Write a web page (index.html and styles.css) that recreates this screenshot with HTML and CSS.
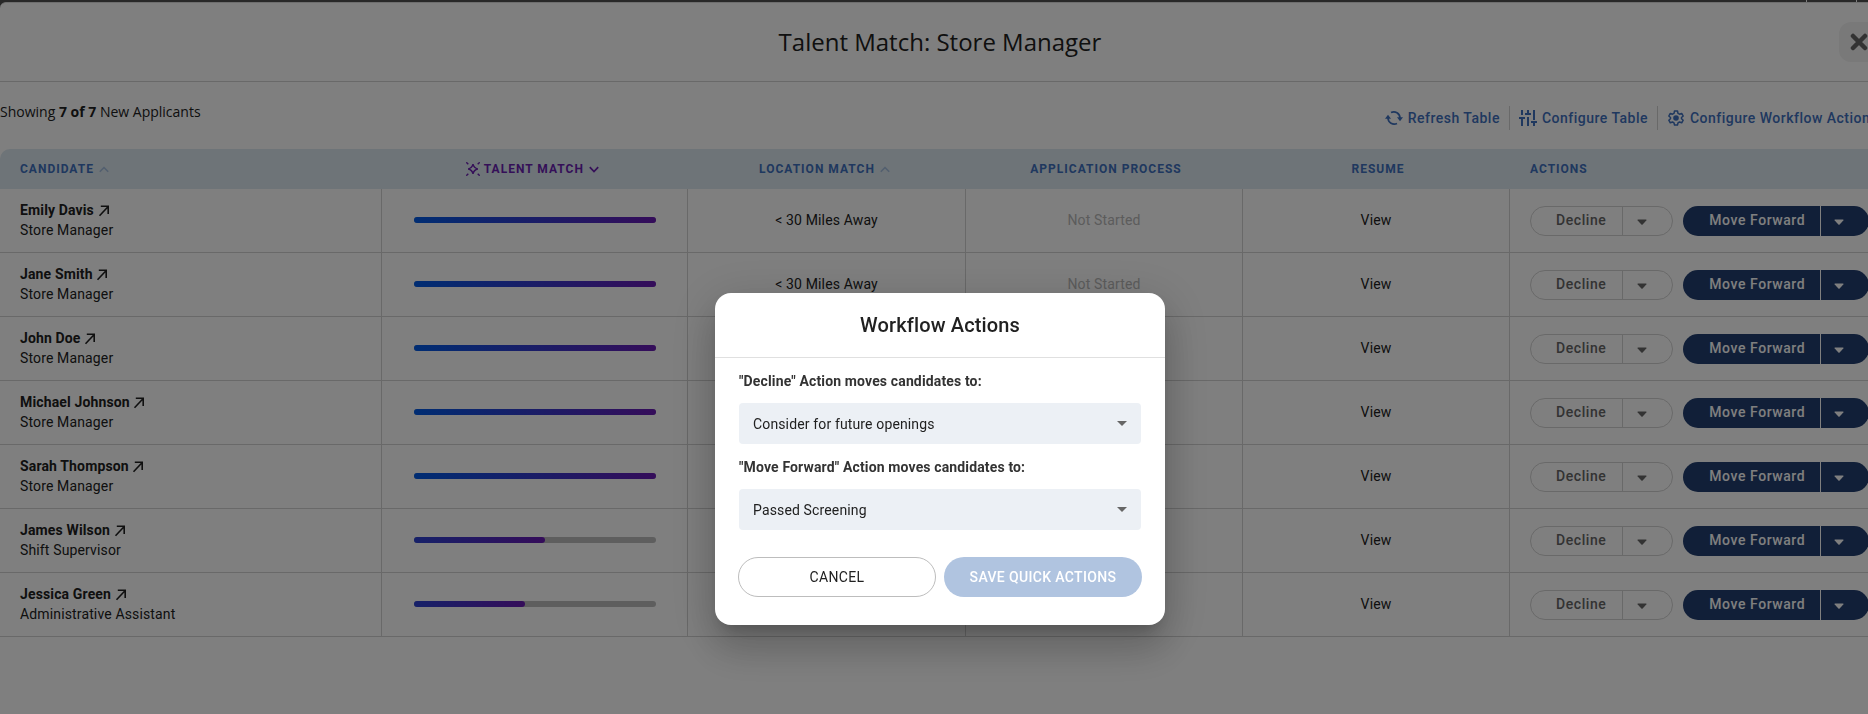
FILE: index.html
```html
<!DOCTYPE html>
<html lang="en">
<head>
<meta charset="utf-8">
<title>Talent Match: Store Manager</title>
<link rel="stylesheet" href="styles.css">
</head>
<body>
<svg class="sprite" aria-hidden="true">
  <symbol id="i-out" viewBox="0 0 12 12"><path d="M1.5 10.8 10 1.8M2.8 1.3H10.2V9" fill="none" stroke="currentColor" stroke-width="1.6"/></symbol>
  <symbol id="i-caret" viewBox="0 0 10 5"><path d="M0 0h10L5 5z" fill="currentColor"/></symbol>
  <symbol id="i-menu" viewBox="0 0 10 6"><path d="M1 .5h8q.8.2.3.900L5.600 5.400q-.6.5-1.200 0L.7 1.400Q.2.700 1 .5z" fill="currentColor"/></symbol>
  <symbol id="i-up" viewBox="0 0 10 7"><path d="M.8 5.800 5 1.500 9.200 5.800" fill="none" stroke="currentColor" stroke-width="1.500"/></symbol>
</svg>
<div class="topbar"><span></span><span></span></div>
<main class="page">
  <header class="page-head">
    <h1>Talent Match: Store Manager</h1>
    <button class="close" aria-label="Close"><svg viewBox="0 0 18 18"><path d="M3 3 15 15M15 3 3 15" fill="none" stroke="currentColor" stroke-width="4.500" stroke-linecap="round"/></svg></button>
  </header>
  <div class="tools">
    <p>Showing <b>7 of 7</b> New Applicants</p>
    <nav>
      <button><svg viewBox="0 0 18 16"><path d="M6 2.600A6.200 6.200 0 0 1 15 8M12 13.400A6.200 6.200 0 0 1 3 8" fill="none" stroke="currentColor" stroke-width="1.700"/><path d="M0 8.800 3 4.800 6 8.800zM12 7.200 15 11.200 18 7.200z" fill="currentColor"/></svg>Refresh Table</button>
      <button><svg viewBox="0 0 18 16"><path d="M3 0v5M3 8v8M0 8h6M9 0v4M6 4h6M9 7v9M15 0v10M15 13v3M12 12h6" fill="none" stroke="currentColor" stroke-width="2"/></svg>Configure Table</button>
      <button><svg viewBox="0 0 16 16"><path d="M6.500 1h3l.5 2.300 1.500.9 2.200-.8 1.500 2.600-1.700 1.500v1.200l1.700 1.500-1.500 2.600-2.200-.8-1.500.9-.5 2.100h-3l-.5-2.100-1.500-.9-2.200.8-1.500-2.600 1.700-1.500V7.500L.8 6l1.500-2.600 2.200.8L6 3.300z" fill="none" stroke="currentColor" stroke-width="1.500" stroke-linejoin="round"/><circle cx="8" cy="8" r="2.800" fill="currentColor"/></svg>Configure Workflow Actions</button>
    </nav>
  </div>
  <table>
    <colgroup><col class="c1"><col class="c2"><col class="c3"><col class="c4"><col class="c5"><col class="c6"></colgroup>
    <thead><tr>
      <th class="left">Candidate <svg class="sort"><use href="#i-up"/></svg></th>
      <th class="sortable talent"><svg class="spark" viewBox="0 0 14 14"><path d="M7 2.200Q7.900 6.100 11.800 7 7.900 7.900 7 11.800 6.100 7.900 2.200 7 6.100 6.100 7 2.200z" fill="none" stroke="currentColor" stroke-width="1.400"/><path d="M.3.3 2.300 2.300M13.700.3 11.700 2.300M.3 13.700 2.300 11.700M13.700 13.700 11.700 11.700" stroke="currentColor" stroke-width="1.400"/></svg> Talent Match <svg class="sort on" viewBox="0 0 10 7"><path d="M.8 1.200 5 5.500 9.200 1.200" fill="none" stroke="currentColor" stroke-width="1.700"/></svg></th>
      <th class="sortable">Location Match <svg class="sort"><use href="#i-up"/></svg></th>
      <th class="plain">Application Process</th>
      <th class="plain">Resume</th>
      <th class="left">Actions</th>
    </tr></thead>
    <tbody id="rows"></tbody>
  </table>
</main>
<div class="overlay">
  <form class="dialog" role="dialog" aria-labelledby="dlg-title">
    <h2 id="dlg-title">Workflow Actions</h2>
    <div class="dialog-body">
      <label for="decline">"Decline" Action moves candidates to:</label>
      <div class="field"><select id="decline"><option>Consider for future openings</option></select><svg><use href="#i-caret"/></svg></div>
      <label for="forward">"Move Forward" Action moves candidates to:</label>
      <div class="field"><select id="forward"><option>Passed Screening</option></select><svg><use href="#i-caret"/></svg></div>
      <div class="dialog-actions">
        <button type="button" class="cancel">CANCEL</button>
        <button type="button" class="save" disabled>SAVE QUICK ACTIONS</button>
      </div>
    </div>
  </form>
</div>
<script src="rows.js"></script>
</body>
</html>
```
FILE: rows.js
```js
const candidates = [
  ["Emily Davis", "Store Manager", 100],
  ["Jane Smith", "Store Manager", 100],
  ["John Doe", "Store Manager", 100],
  ["Michael Johnson", "Store Manager", 100],
  ["Sarah Thompson", "Store Manager", 100],
  ["James Wilson", "Shift Supervisor", 54],
  ["Jessica Green", "Administrative Assistant", 46]
];
const caret = '<svg class="caret"><use href="#i-menu"/></svg>';
document.getElementById("rows").innerHTML = candidates.map(([name, role, score]) => `
  <tr>
    <td class="left"><a href="#">${name} <svg class="out"><use href="#i-out"/></svg></a><span class="role">${role}</span></td>
    <td><div class="bar"><div class="fill${score < 100 ? " partial" : ""}" style="width:${score}%"></div></div></td>
    <td>&lt; 30 Miles Away</td>
    <td class="muted">Not Started</td>
    <td class="resume"><a href="#">View</a></td>
    <td class="left"><div class="actions">
      <div class="split"><button>Decline</button><button class="more" aria-label="Decline options">${caret}</button></div>
      <div class="split primary"><button>Move Forward</button><button class="more" aria-label="Move forward options">${caret}</button></div>
    </div></td>
  </tr>`).join("");
```
FILE: styles.css
```css
* { box-sizing: border-box; }
body {
  margin: 0;
  min-height: 100vh;
  overflow: hidden;
  background: #505050;
  color: #212121;
  font: 14px/20px Roboto, "Liberation Sans", sans-serif;
  letter-spacing: 0.01em;
}
button, select { font: inherit; letter-spacing: inherit; color: inherit; }
button { border: 0; padding: 0; background: none; cursor: pointer; }
a { color: inherit; text-decoration: none; }
.sprite { position: absolute; width: 0; height: 0; }

.topbar { height: 2px; display: flex; justify-content: flex-end; gap: 49px; padding-right: 11px; }
.topbar span { width: 1px; background: #fff; }

.page {
  width: calc(100% + 12px);
  min-height: calc(100vh - 2px);
  background: #fff;
  border-top: 1px solid #ddd;
  border-radius: 6px 6px 0 0;
}
.page-head {
  display: grid;
  grid-template-columns: 1fr auto 1fr;
  align-items: center;
  height: 79px;
  border-bottom: 1px solid #d2d2d2;
}
h1 {
  grid-column: 2;
  margin: 0;
  font: 24px/32px "Open Sans", "Noto Sans", sans-serif;
  letter-spacing: normal;
}
.close {
  justify-self: end;
  display: grid;
  place-items: center;
  width: 41px;
  height: 40px;
  padding-right: 2px;
  border-radius: 12px;
  background: #f2f2f2;
  color: #666;
}
.close svg { width: 18px; height: 18px; }

.tools { display: flex; justify-content: space-between; height: 67px; padding-top: 20px; }
.tools p { margin: 0; font: 14px/20px "Open Sans", "Noto Sans", sans-serif; letter-spacing: normal; }
.tools nav { display: flex; height: 32px; padding: 4px 2px 0 0; }
.tools nav button {
  display: flex;
  align-items: center;
  gap: 5px;
  height: 24px;
  padding: 0 9px;
  color: #3e70be;
  font-weight: 500;
  letter-spacing: 0.035em;
  white-space: nowrap;
}
.tools nav button + button { border-left: 1px solid #d2d2d2; }
.tools nav button:last-child { padding-right: 0; }
.tools nav svg { width: 18px; height: 16px; }

table { width: 100%; table-layout: fixed; border-collapse: separate; border-spacing: 0; }
.c1 { width: 382px; }
.c2 { width: 306px; }
.c3 { width: 278px; }
.c4 { width: 277px; }
.c5 { width: 267px; }
th {
  height: 40px;
  padding: 0 20px;
  background: #dce8f0;
  color: #3e70be;
  font-size: 12px;
  font-weight: 700;
  letter-spacing: 1px;
  text-transform: uppercase;
}
th:first-child { border-radius: 10px 0 0; }
.sortable { padding-right: 23px; }
.plain { padding-left: 23px; }
.talent { color: #6a1fb0; }
.sort { width: 10px; height: 7px; margin: 0 2px 0 1px; opacity: .35; }
.sort.on { opacity: 1; }
.spark { width: 14px; height: 14px; vertical-align: -3px; }
td {
  height: 64px;
  padding: 0 20px 1px;
  border-bottom: 1px solid #d2d2d2;
  text-align: center;
}
td:last-child { padding-bottom: 0; }
td:not(:last-child) { border-right: 1px solid #d2d2d2; }
.left { text-align: left; }
td.left a { display: block; font-weight: 700; }
.out { width: 12px; height: 12px; vertical-align: -2px; }
.role { display: block; }
.muted { color: #b8b8b8; }
.bar { height: 6px; margin: 0 11px 0 12px; border-radius: 3px; background: #bdbdbd; }
.fill { height: 6px; border-radius: 3px; background: linear-gradient(90deg, #005ae6, #6a1ab4); }
.fill.partial { background: linear-gradient(90deg, #2c42d2, #6a1ab4); }

.actions { display: flex; gap: 10px; }
.split {
  display: flex;
  flex: none;
  height: 30px;
  border: 1px solid #d2d2d2;
  border-radius: 15px;
  overflow: hidden;
  color: #666;
  font-weight: 500;
  letter-spacing: 0.04em;
}
.split button { padding: 0 16px 1px 25px; }
.split .more { width: 50px; padding: 0 12px 0 0; border-left: 1px solid #d2d2d2; }
.primary { border: 0; background: #223e70; color: #fff; }
.primary button { padding-left: 26px; padding-right: 15px; }
.primary .more { width: 49px; border-color: #fff; }
.caret { width: 10px; height: 6px; vertical-align: 1px; }

.overlay {
  position: fixed;
  inset: 0 -12px 0 0;
  display: grid;
  justify-items: center;
  align-content: end;
  padding-bottom: 89px;
  background: rgba(0, 0, 0, .5);
}
.dialog {
  width: 450px;
  border-radius: 16px;
  background: #fff;
  box-shadow: 0 11px 15px -7px rgba(0,0,0,.2), 0 24px 38px 3px rgba(0,0,0,.14), 0 9px 46px 8px rgba(0,0,0,.12);
}
h2 {
  margin: 0;
  padding: 20px 0;
  border-bottom: 1px solid #e0e0e0;
  font-size: 20px;
  line-height: 24px;
  font-weight: 500;
  text-align: center;
}
.dialog-body { display: flex; flex-direction: column; padding: 13px 24px 28px; }
label { font-weight: 700; line-height: 20px; color: #333; }
.field { display: grid; align-items: center; margin: 12px 0 13px; }
.field > * { grid-area: 1 / 1; }
.field select {
  appearance: none;
  width: 100%;
  height: 41px;
  padding: 0 14px;
  border: 0;
  border-radius: 4px;
  background: #ecf0f5;
}
.field svg { justify-self: end; width: 10px; height: 5px; margin-right: 14px; color: #666; pointer-events: none; }
.dialog-actions { display: grid; grid-template-columns: 1fr 1fr; gap: 8px; margin: 14px -1px 0; }
.dialog-actions button { height: 40px; border-radius: 20px; letter-spacing: 0.025em; }
.cancel { border: 1px solid #bdbdbd; }
.save { background: #b0c4e0; color: #fff; font-weight: 500; }
```
